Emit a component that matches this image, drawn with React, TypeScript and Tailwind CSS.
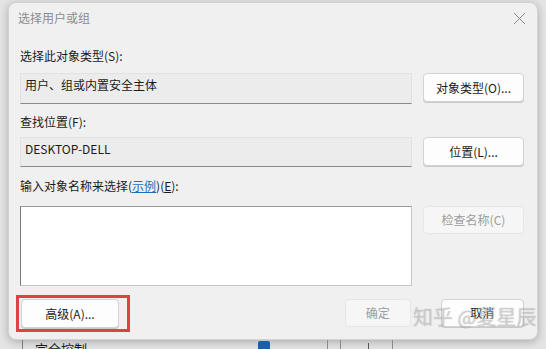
import React from 'react';

const font = { fontFamily: '"Noto Sans CJK SC", "Noto Sans", sans-serif' };

function Btn({ children, disabled, className = '' }: { children: React.ReactNode; disabled?: boolean; className?: string }) {
  return (
    <div
      className={`flex items-center justify-center rounded-[4px] border text-[12px] ${
        disabled
          ? 'border-[#e6e6e6] bg-[#f6f6f6] text-[#9d9d9d]'
          : 'border-[#d3d3d3] bg-[#fdfdfd] text-[#1b1b1b] shadow-[0_1px_0_#c9c9c9]'
      } ${className}`}
    >
      {children}
    </div>
  );
}

export default function App() {
  return (
    <div className="relative h-[349px] w-[546px] overflow-hidden bg-[#e4e4e4]" style={font}>
      <div className="mx-[8px] mt-[2px] flex h-[338px] w-[530px] flex-col rounded-[8px] border border-[#d2d2d2] bg-[#f0f0f0] shadow-[0_2px_8px_rgba(0,0,0,0.25)]">
        {/* title */}
        <div className="flex h-[30px] items-center justify-between pl-[9px] pr-[10px]">
          <span className="text-[12px] text-[#8c8c8c]">选择用户或组</span>
          <svg width="13" height="13" viewBox="0 0 13 13" className="mr-[1px]">
            <path d="M1 1 L12 12 M12 1 L1 12" stroke="#8a8a8a" strokeWidth="1" />
          </svg>
        </div>

        <div className="flex flex-col pl-[11px] pr-[13px] text-[12px] text-[#1b1b1b]">
          <div className="mt-[15px] h-[16px] leading-[16px]">选择此对象类型(S):</div>
          <div className="mt-[9px] flex gap-[11px]">
            <div className="h-[31px] w-[392px] border border-b-[#8a8a8a] border-[#e2e2e2] bg-[#ececec] pl-[4px] pt-[3px] leading-[16px]">
              用户、组或内置安全主体
            </div>
            <Btn className="h-[29px] w-[101px]">对象类型(O)...</Btn>
          </div>

          <div className="mt-[10px] h-[16px] leading-[16px]">查找位置(F):</div>
          <div className="mt-[7px] flex gap-[11px]">
            <div className="h-[30px] w-[392px] border border-b-[#8a8a8a] border-[#e2e2e2] bg-[#ececec] pl-[4px] pt-[3px] leading-[16px]">
              DESKTOP-DELL
            </div>
            <Btn className="h-[29px] w-[101px]">位置(L)...</Btn>
          </div>

          <div className="mt-[11px] h-[16px] leading-[16px]">
            输入对象名称来选择(<span className="text-[#1a6fb8] underline">示例</span>)(<span className="underline">E</span>):
          </div>
          <div className="mt-[12px] flex gap-[11px]">
            <div className="h-[80px] w-[392px] border border-[#c6c6c6] border-l-[#7a7a7a] border-t-[#9a9a9a] bg-white" />
            <Btn disabled className="h-[28px] w-[101px]">检查名称(C)</Btn>
          </div>

          <div className="mt-[13px] flex items-start">
            <div className="relative ml-[1px]">
              <Btn className="h-[29px] w-[98px]">高级(A)...</Btn>
              <div className="pointer-events-none absolute left-[-5px] top-[-4px] h-[37px] w-[114px] border-[3px] border-[#e04048]" />
            </div>
            <Btn disabled className="ml-[226px] h-[28px] w-[66px]">确定</Btn>
            <Btn className="ml-[30px] h-[28px] w-[84px]">取消</Btn>
          </div>
        </div>
      </div>

      {/* window behind */}
      <div className="relative h-[9px] overflow-hidden">
        <div className="absolute left-[22px] top-0 h-[9px] w-[1px] bg-[#7a7a7a]" />
        <div className="absolute left-[35px] top-[1px] text-[13px] leading-[16px] text-[#1b1b1b]">完全控制</div>
        <div className="absolute left-[258px] top-[1px] h-[12px] w-[12px] rounded-[2px] bg-[#1a5fa8]" />
        <div className="absolute left-[327px] top-0 h-[9px] w-[1px] bg-[#8a8a8a]" />
        <div className="absolute left-[340px] top-0 h-[9px] w-[1px] bg-[#8a8a8a]" />
        <div className="absolute left-[368px] top-[3px] h-[6px] w-[1px] bg-[#555]" />
        <div className="absolute left-[392px] top-0 h-[9px] w-[1px] bg-[#8a8a8a]" />
      </div>

      {/* watermark */}
      <div
        className="pointer-events-none absolute left-[413px] top-[304px] text-[20px] leading-[26px] text-white/40"
        style={{ textShadow: '0 0 1px rgba(0,0,0,0.35)' }}
      >
        知乎 @夏星辰
      </div>
    </div>
  );
}
